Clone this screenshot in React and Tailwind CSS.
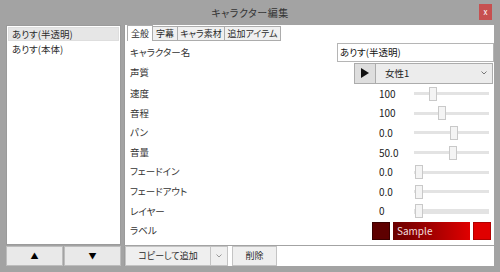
import React from 'react';

const FONT = "font-['Meiryo_UI','Noto_Sans_CJK_JP',sans-serif] [font-feature-settings:'palt']";

const sliderRows = [
  { label: '速度', value: '100', pos: 15 },
  { label: '音程', value: '100', pos: 24 },
  { label: 'パン', value: '0.0', pos: 36 },
  { label: '音量', value: '50.0', pos: 35 },
  { label: 'フェードイン', value: '0.0', pos: 1 },
  { label: 'フェードアウト', value: '0.0', pos: 1 },
  { label: 'レイヤー', value: '0', pos: 1, thick: true },
];

const Slider = ({ pos, thick }) => (
  <div className="relative w-[75px] h-[16px] flex items-center">
    <div className={`w-full ${thick ? 'h-[5px]' : 'h-[3px]'} bg-[#e3e3e3]`} />
    <div
      className="absolute top-[1px] w-[8px] h-[14px] bg-[#f4f4f4] border border-[#c9c9c9]"
      style={{ left: pos }}
    />
  </div>
);

const Row = ({ label, children, h = 'h-[19.6px]' }) => (
  <div className={`flex items-center ${h}`}>
    <div className="flex-1 text-[#333] text-[9.5px] leading-none">{label}</div>
    {children}
  </div>
);

const App = () => {
  return (
    <div className={`w-[500px] h-[272px] bg-[#a3a3a3] flex flex-col ${FONT}`}>
      {/* title bar */}
      <div className="relative h-[25px] flex items-center justify-center">
        <span className="text-[10px] text-[#333] tracking-[0.5px]">キャラクター編集</span>
        <div className="absolute right-[8px] top-[4px] w-[13px] h-[16px] bg-[#c75050] flex items-center justify-center text-white text-[8px] leading-none">
          x
        </div>
      </div>

      <div className="flex-1 flex px-[6px] pb-[6px] gap-[3px]">
        {/* left column */}
        <div className="w-[115px] flex flex-col gap-[1px]">
          <div className="flex-1 bg-white border border-[#9b9b9b] p-[1px] text-[9.5px] text-[#2a2a2a]">
            <div className="h-[14px] px-[3px] flex items-center bg-[#e6e6e6] border border-[#dedede]">ありす(半透明)</div>
            <div className="h-[14px] px-[4px] mt-[1px] flex items-center">ありす(本体)</div>
          </div>
          <div className="h-[20px] flex gap-[1px]">
            <div className="flex-1 bg-[#e9e9e9] border border-[#bdbdbd] flex items-center justify-center text-[8px] text-black">▲</div>
            <div className="flex-1 bg-[#e9e9e9] border border-[#bdbdbd] flex items-center justify-center text-[8px] text-black">▼</div>
          </div>
        </div>

        {/* right column */}
        <div className="flex-1 flex flex-col gap-[1px]">
          <div className="flex-1 bg-white border-l border-[#9b9b9b] flex flex-col">
            {/* tabs */}
            <div className="h-[16px] flex items-end pl-[2px] text-[9px] text-[#2a2a2a]">
              <div className="w-[26px] h-[16px] flex items-center justify-center bg-white border border-b-0 border-[#acacac]">全般</div>
              <div className="w-[25px] h-[15px] flex items-center justify-center bg-[#f0f0f0] border border-l-0 border-[#acacac]">字幕</div>
              <div className="w-[47px] h-[15px] flex items-center justify-center bg-[#f0f0f0] border border-l-0 border-[#acacac]">キャラ素材</div>
              <div className="w-[56px] h-[15px] flex items-center justify-center bg-[#f0f0f0] border border-l-0 border-[#acacac]">追加アイテム</div>
            </div>

            <div className="flex flex-col pl-[5px] pt-[2px]">
              <Row label="キャラクター名" h="h-[19px]">
                <div className="w-[157px] h-[19px] border border-[#b5b5b5] flex items-center px-[2px] text-[9.5px] text-[#111]">
                  ありす(半透明)
                </div>
              </Row>
              <Row label="声質" h="h-[22px]">
                <div className="flex h-[21px] mr-[1px]">
                  <div className="w-[22px] h-full bg-[#dedede] border border-[#acacac] flex items-center justify-center">
                    <svg width="8" height="10" viewBox="0 0 8 10"><path d="M0 0 L8 5 L0 10 Z" fill="#111" /></svg>
                  </div>
                  <div className="w-[117px] h-full bg-[#ececec] border border-l-0 border-[#acacac] flex items-center pl-[9px] pr-[5px] text-[9.5px] text-[#222]">
                    <span className="flex-1">女性1</span>
                    <svg width="6" height="4" viewBox="0 0 6 4"><path d="M0.5 0.5 L3 3 L5.5 0.5" stroke="#777" fill="none" /></svg>
                  </div>
                </div>
              </Row>
              {sliderRows.map((r) => (
                <Row key={r.label} label={r.label}>
                  <div className="w-[35px] text-[10px] text-[#222] leading-none">{r.value}</div>
                  <Slider pos={r.pos} thick={r.thick} />
                  <div className="w-[5px]" />
                </Row>
              ))}
              <Row label="ラベル">
                <div className="flex h-[18px] gap-[3px] mr-[3px]">
                  <div className="w-[18px] bg-[#5e0000] border border-[#3a0000]" />
                  <div className="w-[77px] bg-gradient-to-r from-[#6a0000] to-[#e00000] flex items-center pl-[4px] text-[10px] text-[#f3dede]">
                    Sample
                  </div>
                  <div className="w-[18px] bg-[#e00000] border border-[#b00000]" />
                </div>
              </Row>
            </div>
          </div>

          {/* bottom buttons */}
          <div className="h-[20px] flex bg-white border-l border-[#9b9b9b] text-[9px] text-[#2a2a2a]">
            <div className="w-[86px] bg-[#efefef] border border-[#c4c4c4] flex items-center justify-center">コピーして追加</div>
            <div className="w-[17px] bg-[#efefef] border border-l-0 border-[#c4c4c4] flex items-center justify-center">
              <svg width="6" height="4" viewBox="0 0 6 4"><path d="M0.5 0.5 L3 3 L5.5 0.5" stroke="#999" fill="none" /></svg>
            </div>
            <div className="w-[4px]" />
            <div className="w-[45px] bg-[#efefef] border border-[#c4c4c4] flex items-center justify-center">削除</div>
            <div className="flex-1" />
          </div>
        </div>
      </div>
    </div>
  );
};

export default App;
